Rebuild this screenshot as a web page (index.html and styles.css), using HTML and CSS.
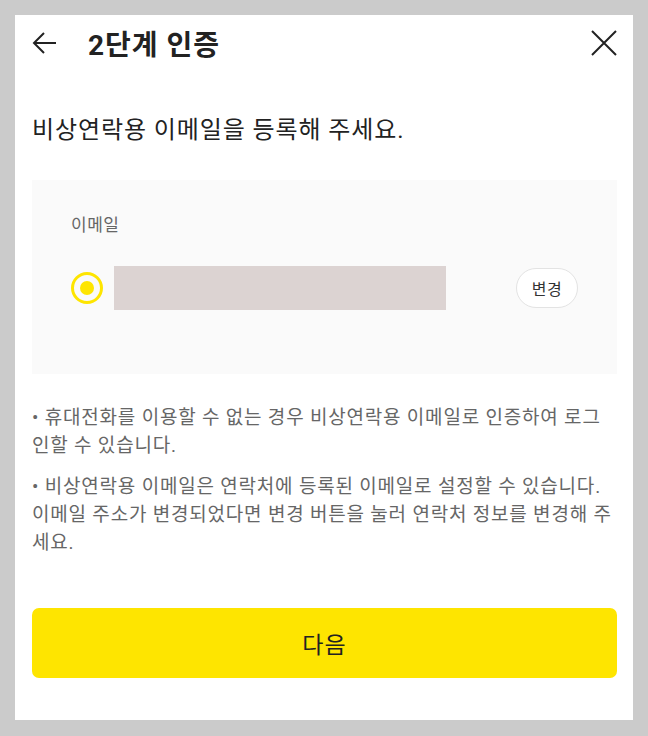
FILE: index.html
```html
<!DOCTYPE html>
<html lang="ko">
<head>
  <meta charset="UTF-8">
  <meta name="viewport" content="width=device-width, initial-scale=1.0">
  <title>2단계 인증</title>
  <link rel="stylesheet" href="styles.css">
</head>
<body>

  <div class="panel">
    <div class="header">
      <button class="icon-btn" aria-label="뒤로">
        <svg width="26" height="26" viewBox="0 0 26 26"><path d="M24 13H3M12 3L2 13l10 10" fill="none" stroke="#222" stroke-width="2"/></svg>
      </button>
      <h1 class="title">2단계 인증</h1>
      <button class="icon-btn close" aria-label="닫기">
        <svg width="26" height="26" viewBox="0 0 26 26"><path d="M1 1l24 24M25 1L1 25" fill="none" stroke="#222" stroke-width="2"/></svg>
      </button>
    </div>

    <h2 class="lead">비상연락용 이메일을 등록해 주세요.</h2>

    <div class="email-box">
      <div class="label">이메일</div>
      <div class="email-row">
        <span class="radio"></span>
        <span class="masked"></span>
        <button class="change-btn">변경</button>
      </div>
    </div>

    <div class="notes">
      <p>• 휴대전화를 이용할 수 없는 경우 비상연락용 이메일로 인증하여 로그인할 수 있습니다.</p>
      <p>• 비상연락용 이메일은 연락처에 등록된 이메일로 설정할 수 있습니다. 이메일 주소가 변경되었다면 변경 버튼을 눌러 연락처 정보를 변경해 주세요.</p>
    </div>

    <button class="next-btn">다음</button>
  </div>

</body>
</html>
```

FILE: styles.css
```css
body { margin: 0; padding: 15px; background: #cbcbcb; font-family: Roboto, "Noto Sans CJK KR", sans-serif; color: #222; }
.panel { width: 618px; height: 705px; box-sizing: border-box; background: #fff; padding: 0 16px 0 17px; }

.header { display: flex; align-items: center; height: 55px; }
.icon-btn { background: none; border: none; padding: 0; width: 26px; height: 26px; cursor: pointer; }
.icon-btn svg { display: block; }
.title { margin: 0 0 0 30px; font-size: 28px; font-weight: 700; letter-spacing: 1px; flex: 1; }

.lead { margin: 45px 0 0; font-size: 24px; font-weight: 400; line-height: 30px; letter-spacing: 0.9px; }

.email-box { margin-top: 35px; background: #fafafa; padding: 34px 39px 0; height: 194px; box-sizing: border-box; }
.label { font-size: 17px; color: #666; line-height: 22px; letter-spacing: 0.5px; }
.email-row { display: flex; align-items: center; margin-top: 30px; }
.radio { width: 32px; height: 32px; box-sizing: border-box; border: 3px solid #fee500; border-radius: 50%; display: flex; align-items: center; justify-content: center; }
.radio::after { content: ""; width: 14px; height: 14px; border-radius: 50%; background: #fee500; }
.masked { width: 332px; height: 44px; background: #dcd3d2; margin-left: 11px; }
.change-btn { margin-left: auto; width: 62px; height: 40px; border: 1px solid #e3e3e3; border-radius: 20px; background: #fff; font-family: inherit; font-size: 16px; color: #333; padding: 0; letter-spacing: 0.5px; }

.notes { margin-top: 30px; color: #666; font-size: 19px; line-height: 28px; letter-spacing: 0.8px; }
.notes p { margin: 0; }
.notes p + p { margin-top: 13px; }

.next-btn { display: block; width: 100%; height: 70px; margin-top: 51px; border: none; border-radius: 7px; background: #fee500; font-family: inherit; font-size: 23px; letter-spacing: 1px; color: #222; cursor: pointer; }
```
